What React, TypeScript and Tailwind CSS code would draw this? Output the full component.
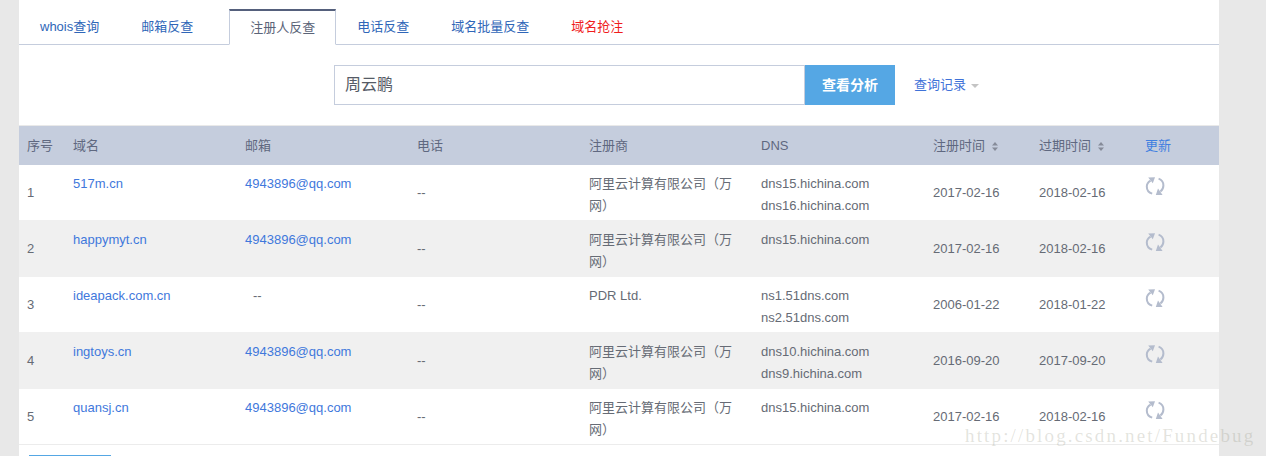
const font = 'font-["Liberation_Sans","Noto_Sans_CJK_SC",sans-serif]';
const gridCols = 'grid grid-cols-[46px_172px_172px_172px_172px_172px_106px_106px_82px]';

const tabs = ['whois查询', '邮箱反查', '注册人反查', '电话反查', '域名批量反查', '域名抢注'];

const rows = [
  { id: 1, domain: '517m.cn', email: '4943896@qq.com', registrar: '阿里云计算有限公司（万网）', dns: ['dns15.hichina.com', 'dns16.hichina.com'], created: '2017-02-16', expires: '2018-02-16' },
  { id: 2, domain: 'happymyt.cn', email: '4943896@qq.com', registrar: '阿里云计算有限公司（万网）', dns: ['dns15.hichina.com'], created: '2017-02-16', expires: '2018-02-16' },
  { id: 3, domain: 'ideapack.com.cn', email: '', registrar: 'PDR Ltd.', dns: ['ns1.51dns.com', 'ns2.51dns.com'], created: '2006-01-22', expires: '2018-01-22' },
  { id: 4, domain: 'ingtoys.cn', email: '4943896@qq.com', registrar: '阿里云计算有限公司（万网）', dns: ['dns10.hichina.com', 'dns9.hichina.com'], created: '2016-09-20', expires: '2017-09-20' },
  { id: 5, domain: 'quansj.cn', email: '4943896@qq.com', registrar: '阿里云计算有限公司（万网）', dns: ['dns15.hichina.com'], created: '2017-02-16', expires: '2018-02-16' },
];

function SortIcon() {
  return (
    <svg width="6" height="9" viewBox="0 0 6 9" className="ml-[7px] mt-px fill-[#868b99]">
      <path d="M3 0 6 3.6H0z" />
      <path d="M3 9 0 5.4H6z" />
    </svg>
  );
}

function RefreshIcon() {
  return (
    <svg width="20" height="20" viewBox="0 0 20 20" fill="none" className="stroke-[#b4bccd] fill-none">
      <path d="M5.6 4.6C3.2 6 1.8 8 1.8 10.4c0 3.4 2.2 6.2 5.4 7.2" strokeWidth="2" />
      <path d="M13.6 2.6c3 1 4.8 3.8 4.8 6.9 0 2.4-1.2 4.6-3 6" strokeWidth="2" />
      <path d="M3.2 1.4 10 1.2 7.8 7.2z" className="fill-[#b4bccd] stroke-none" />
      <path d="M17.6 19 10.8 19 13 12.6z" className="fill-[#b4bccd] stroke-none" />
    </svg>
  );
}

export default function App() {
  return (
    <div className={`h-[456px] overflow-hidden bg-[#e8e8e8] relative ${font}`}>
      <div className="ml-[19px] w-[1200px] h-[456px] bg-white text-[13px] text-[#666b75]">
        <div className="h-[45px] flex items-end border-b border-[#c5cddd]">
          {tabs.map((tab, i) => {
            if (i === 2) {
              return (
                <div key={tab} className="ml-[15px] h-[36px] -mb-px px-[20px] flex items-center bg-white border-x border-b border-b-white border-x-[#c5cddd] border-t-[2px] border-t-[#55607c] text-[#5b6478]">
                  {tab}
                </div>
              );
            }
            return (
              <div key={tab} className={`h-[35px] px-[21px] flex items-center ${i === 5 ? 'text-[#f01c1c]' : 'text-[#2f66b8]'}`}>
                {tab}
              </div>
            );
          })}
        </div>

        <div className="h-[80px] flex items-center pl-[315px]">
          <div className="w-[471px] h-[40px] border border-[#c5cddd] pl-[10px] flex items-center text-[16px] text-[#555b66]">周云鹏</div>
          <button className="w-[90px] h-[40px] bg-[#55a7e4] text-white text-[14px] font-bold">查看分析</button>
          <div className="ml-[19px] flex items-center text-[#3f72d8]">
            查询记录
            <span className="ml-[5px] mt-[2px] border-x-[4px] border-x-transparent border-t-[4px] border-t-[#c4c4c4]" />
          </div>
        </div>

        <div className={`${gridCols} h-[40px] bg-[#c5cddd] border-t border-[#e9e9e9] items-center text-[#5f6880]`}>
          <div className="pl-2">序号</div>
          <div className="pl-2">域名</div>
          <div className="pl-2">邮箱</div>
          <div className="pl-2">电话</div>
          <div className="pl-2">注册商</div>
          <div className="pl-2">DNS</div>
          <div className="pl-2 flex items-center">注册时间<SortIcon /></div>
          <div className="pl-2 flex items-center">过期时间<SortIcon /></div>
          <div className="pl-2 text-[#3f7fe0]">更新</div>
        </div>

        {rows.map((row, i) => {
          // the striped rows are 2px taller than the white ones
          const striped = i % 2 === 1;
          const top = striped ? 'pt-[9px]' : 'pt-[8px]';
          const height = striped ? 'h-[57px] bg-[#f0f0f0]' : i === 4 ? 'h-[56px] bg-white border-b border-[#ececec]' : 'h-[55px] bg-white';
          return (
            <div key={row.id} className={`${gridCols} leading-[22px] ${height}`}>
              <div className="pl-2 self-center">{row.id}</div>
              <div className={`pl-2 ${top} text-[#3f78dc]`}>{row.domain}</div>
              {row.email ? (
                <div className={`pl-2 ${top} text-[#3f78dc]`}>{row.email}</div>
              ) : (
                <div className={`pl-4 ${top}`}>--</div>
              )}
              <div className="pl-2 self-center">--</div>
              <div className={`px-2 ${top}`}>{row.registrar}</div>
              <div className={`pl-2 ${top}`}>
                {row.dns.map(d => (
                  <div key={d}>{d}</div>
                ))}
              </div>
              <div className="pl-2 self-center">{row.created}</div>
              <div className="pl-2 self-center">{row.expires}</div>
              <div className={`pl-2 ${striped ? 'pt-[12px]' : 'pt-[11px]'}`}>
                <RefreshIcon />
              </div>
            </div>
          );
        })}

        <div className="ml-[10px] mt-[10px] w-[82px] h-[30px] border-t border-[#55a7e4]" />
      </div>

      <div className="absolute left-[965px] top-[425px] font-['Liberation_Serif',serif] text-[19px] tracking-[2.15px] leading-[22px] whitespace-nowrap text-[#8f8f7c]/25">
        http://blog.csdn.net/Fundebug
      </div>
    </div>
  );
}
